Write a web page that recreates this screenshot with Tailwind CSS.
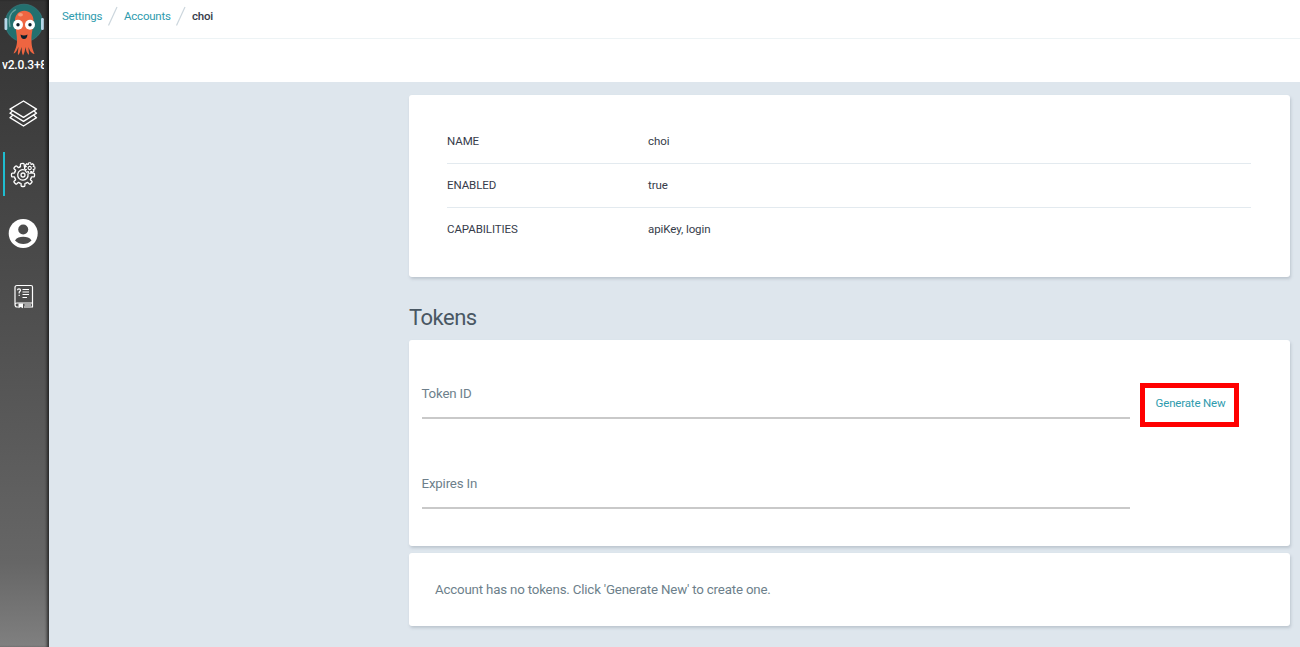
<!DOCTYPE html>
<html lang="en">
<head>
<meta charset="utf-8">
<title>Settings / Accounts / choi</title>
<script src="https://cdn.jsdelivr.net/npm/@tailwindcss/browser@4"></script>
</head>
<body class="flex h-[647px] w-[1300px] overflow-hidden bg-[#dee6ed] font-[Roboto,sans-serif] text-[11.5px] tracking-[-0.12px] text-[#363c4a]">
<nav class="flex h-full w-[49px] shrink-0 flex-col bg-linear-to-b from-[#333] from-0% via-[#666] via-87% to-[#808080] shadow-[inset_-3px_0_3px_-1px_rgba(0,0,0,0.6)]">
  <svg class="h-[58px] w-[49px] shrink-0" viewBox="0 0 49 58">
    <circle cx="24" cy="23" r="18.800" fill="#23706f" stroke="#3a7f86" stroke-width=".6"/>
    <rect x="4.500" y="18" width="2.800" height="12" rx="1.200" fill="#b5d6e8"/><rect x="41" y="18" width="2.800" height="12" rx="1.200" fill="#b5d6e8"/>
    <path d="M10 27C8 18 11 12 16 9.500" fill="none" stroke="#6fa5a3" stroke-width="1.300"/>
    <path d="M15 22C14 7 34.500 7 33.500 22C33 29 31 34 31.500 41C31.500 47 33 50 34.500 54C31 53.500 29.500 50 28.500 47C28.500 50 29 53 29 55C26.500 53 26 50 25.500 47C25 50 24.500 53 23 55.500C21.500 53 22 50 21.500 47C20.500 50 20 54 18 55C17.500 52 18.500 49 18.500 47C17 50 16 53 13.500 53.500C16 48 17 45 17 41C17 34 15.500 29 15 22Z" fill="#ee6541"/>
    <ellipse cx="20.500" cy="14.800" rx="2.500" ry="1.700" fill="#f59a79"/>
    <circle cx="18" cy="24.800" r="5" fill="#fff"/><circle cx="30" cy="24.800" r="5" fill="#fff"/>
    <circle cx="18" cy="24.800" r="1.700" fill="#10202c"/><circle cx="30" cy="24.800" r="1.700" fill="#10202c"/>
    <path d="M20.500 34.500Q24 36.500 27.500 34.500Q27 39 24 39T20.500 34.500Z" fill="#10202c"/>
  </svg>
  <div class="ml-[2px] h-[15px] w-[42px] overflow-hidden text-[12px] leading-[15px] font-medium tracking-[-0.2px] whitespace-nowrap text-white">v2.0.3+8</div>
  <svg class="mt-[19px] h-11 w-[49px] shrink-0" viewBox="0 92 49 44" fill="none" stroke="#fff" stroke-width="1.400" stroke-linejoin="round">
    <path d="M23.500 101L36.500 109.200L23.500 117.400L10 109.200Z"/>
    <path d="M12.500 111L10 113.200L23.500 121.400L36.500 113.200L34 111M12.500 115.500L10 117.700L23.500 126L36.500 117.700L34 115.500"/>
  </svg>
  <svg class="mt-4 h-11 w-[49px] shrink-0" viewBox="0 152 49 44" fill="none" stroke="#fff" stroke-width="1.300" stroke-linejoin="round" stroke-linecap="round">
    <defs>
      <path id="tooth" d="M-3.300-8L-1.900-8.500V-10.500Q-1.900-11.500-.9-11.500H.9Q1.900-11.500 1.900-10.500V-8.500L3.300-8"/>
      <path id="cog" d="M-1.500-3.600L-1-5.200H1L1.500-3.600"/>
    </defs>
    <rect x="3" y="152" width="2" height="44" fill="#1fbdd0" stroke="none"/>
    <g transform="translate(23 175)">
      <use href="#tooth" transform="rotate(-4)"/><use href="#tooth" transform="rotate(90)"/><use href="#tooth" transform="rotate(135)"/><use href="#tooth" transform="rotate(180)"/><use href="#tooth" transform="rotate(225)"/><use href="#tooth" transform="rotate(270)"/><use href="#tooth" transform="rotate(315)"/>
      <path d="M1.500-5A5.200 5.200 0 1 0 5 -1"/><circle r="2"/>
    </g>
    <g transform="translate(29.700 168)" stroke-width="1.100">
      <use href="#cog"/><use href="#cog" transform="rotate(45)"/><use href="#cog" transform="rotate(90)"/><use href="#cog" transform="rotate(135)"/><use href="#cog" transform="rotate(180)"/><use href="#cog" transform="rotate(225)"/><use href="#cog" transform="rotate(270)"/><use href="#cog" transform="rotate(315)"/>
      <circle r="1.600"/>
    </g>
  </svg>
  <svg class="mt-4 h-11 w-[49px] shrink-0" viewBox="0 212 49 44">
    <circle cx="23.200" cy="233.500" r="14.500" fill="#fff"/>
    <circle cx="23.200" cy="229.500" r="5" fill="#4c4c4c"/>
    <path d="M15 240.500C17 237.500 19.500 236.800 23.200 236.800S29.500 237.500 31.500 240.500C27 245.300 19.500 245.300 15 240.500Z" fill="#4c4c4c"/>
  </svg>
  <svg class="mt-4 h-12 w-[49px] shrink-0" viewBox="0 272 49 48" fill="none" stroke="#fff" stroke-width="1.200" stroke-linejoin="round">
    <path d="M18.500 307H17Q15 307 15 304.500V287.500Q15 285.500 17 285.500H31Q32.500 285.500 32.500 287V303H17Q15 303 15 305M32.500 303V307H24M24.500 305H31"/>
    <path d="M18.500 303.500V308.300L20.700 307L23 308.300V303.500Z" fill="#fff" stroke="none"/>
    <path d="M17.500 290.300Q17.500 288.800 19 288.800T20.500 290.300Q20.500 291.300 19.200 292V293.500M19.200 294.800V296"/>
    <path d="M22.500 289.500H29M22.500 292H29M22.500 294.500H29M22.500 297.500H27"/>
  </svg>
</nav>
<main class="flex min-w-0 flex-1 flex-col">
  <header class="h-[82px] shrink-0 bg-white">
    <div class="flex h-[39px] items-start border-b border-[#edf3f5] pt-[6px] pl-[13px] leading-[21px] tracking-[-0.22px] text-[#2e9bae]">
      <span class="w-[41px]">Settings</span>
      <svg class="h-5 w-[21px]" viewBox="0 0 21 20"><path d="M5.500 19.500L14 1" stroke="#ccd6dd" stroke-width="1.200"/></svg>
      <span class="w-[47px]">Accounts</span>
      <svg class="h-5 w-[21px]" viewBox="0 0 21 20"><path d="M5.500 19.500L14 1" stroke="#ccd6dd" stroke-width="1.200"/></svg>
      <span class="font-medium text-[#363c4a]">choi</span>
    </div>
  </header>
  <div class="mr-[10px] ml-[360px] flex flex-col pt-[13px]">
    <section class="h-[182px] rounded-[3px] bg-white pt-[25px] pr-[39px] pl-[38px] tracking-[-0.08px] shadow-[1px_2px_3px_rgba(90,105,115,0.25)]">
      <div class="flex h-11 items-start border-b border-[#e3eaef] pt-[11px] leading-[21px]"><span class="w-[201px]">NAME</span><span>choi</span></div>
      <div class="flex h-11 items-start border-b border-[#e3eaef] pt-[11px] leading-[21px]"><span class="w-[201px]">ENABLED</span><span>true</span></div>
      <div class="flex h-11 items-start pt-[11px] leading-[21px]"><span class="w-[201px]">CAPABILITIES</span><span>apiKey, login</span></div>
    </section>
    <h2 class="mt-[24px] h-[39px] text-[22px] leading-[33px] tracking-[-0.5px] text-[#495763]">Tokens</h2>
    <section class="flex h-[206px] rounded-[3px] bg-white pl-[12.5px] text-[13.3px] tracking-[-0.18px] text-[#6d7f8b] shadow-[1px_2px_3px_rgba(90,105,115,0.25)]">
      <div class="flex w-[708px] flex-col">
        <div class="h-[79px] border-b-2 border-[#c9c9c9] pt-[44px] leading-5">Token ID</div>
        <div class="h-[90px] border-b-2 border-[#c9c9c9] pt-[55px] leading-5">Expires In</div>
      </div>
      <div class="mt-[43px] ml-[10.500px] flex h-11 w-[99px] justify-center border-[5px] border-[#ff0000] bg-white pt-[5px] text-[11.5px] leading-[21px] text-[#2e9bae]"><span class="ml-[2px] whitespace-nowrap">Generate New</span></div>
    </section>
    <section class="mt-[7px] flex h-[73px] items-center rounded-[3px] bg-white pl-[26px] text-[13.3px] tracking-[-0.18px] text-[#6d7f8b] shadow-[1px_2px_3px_rgba(90,105,115,0.25)]">Account has no tokens. Click 'Generate New' to create one.</section>
  </div>
</main>
</body>
</html>
